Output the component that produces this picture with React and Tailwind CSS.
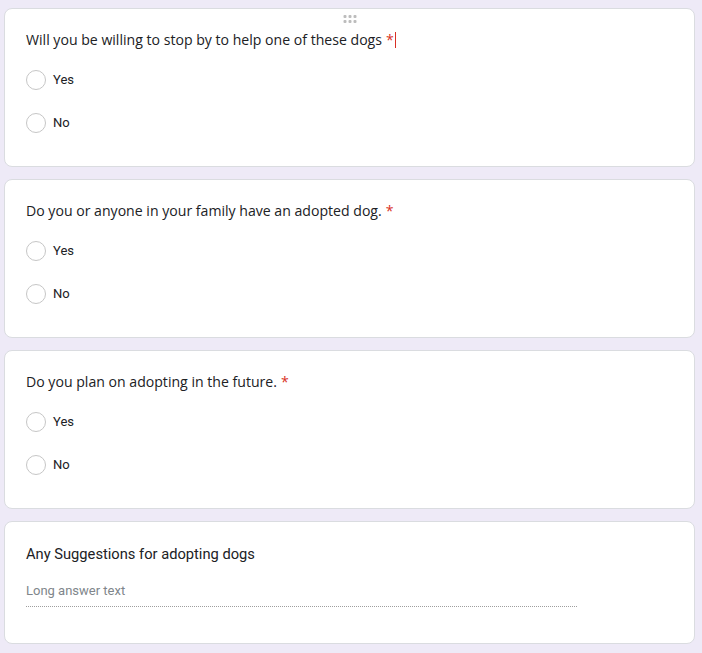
import React from "react";

function Radio({ label }) {
  return (
    <div className="flex h-[43px] items-center">
      <div className="ml-[21px] h-[20px] w-[20px] rounded-full border-[1.5px] border-[#c6c6c6] bg-white" />
      <span className="ml-[7px] text-[13px] text-[#202124]" style={{ fontFamily: "Roboto, sans-serif" }}>
        {label}
      </span>
    </div>
  );
}

function Handle() {
  return (
    <div className="absolute left-1/2 top-[6px] -translate-x-1/2 grid grid-cols-3 gap-x-[2px] gap-y-[2px]">
      {Array.from({ length: 6 }).map((_, i) => (
        <div key={i} className="h-[3px] w-[3px] bg-[#bdbdbd] rounded-[1px]" />
      ))}
    </div>
  );
}

function ChoiceCard({ title, handle, cursor }) {
  return (
    <div className="relative ml-[4px] h-[159px] w-[691px] rounded-[8px] border border-[#dadce0] bg-white">
      {handle && <Handle />}
      <div
        className="ml-[21px] mt-[19px] flex h-[24px] items-center text-[14.1px] leading-[24px] text-[#202124]"
        style={{ fontFamily: "'Open Sans', sans-serif" }}
      >
        <span>{title}</span>
        <span className="ml-[4px] text-[#d93025]">*</span>
        {cursor && <span className="ml-[1px] h-[16px] w-[1px] bg-[#d93025]" />}
      </div>
      <div className="mt-[6px]">
        <Radio label="Yes" />
        <Radio label="No" />
      </div>
    </div>
  );
}

export default function App() {
  return (
    <div className="h-[653px] w-[702px] overflow-hidden bg-[#eeeaf7] pt-[8px]">
      <div className="flex flex-col gap-[12px]">
        <ChoiceCard title="Will you be willing to stop by to help one of these dogs" handle cursor />
        <ChoiceCard title="Do you or anyone in your family have an adopted dog." />
        <ChoiceCard title="Do you plan on adopting in the future." />
        <div className="ml-[4px] h-[123px] w-[691px] rounded-[8px] border border-[#dadce0] bg-white">
          <div
            className="ml-[21px] mt-[20px] h-[24px] text-[14.7px] leading-[24px] text-[#202124]"
            style={{ fontFamily: "Roboto, sans-serif" }}
          >
            Any Suggestions for adopting dogs
          </div>
          <div
            className="ml-[21px] mt-[15px] w-[551px] border-b border-dotted border-[#9e9e9e] pb-[5px] text-[13px] leading-[20px] text-[#80868b]"
            style={{ fontFamily: "Roboto, sans-serif" }}
          >
            Long answer text
          </div>
        </div>
      </div>
    </div>
  );
}
